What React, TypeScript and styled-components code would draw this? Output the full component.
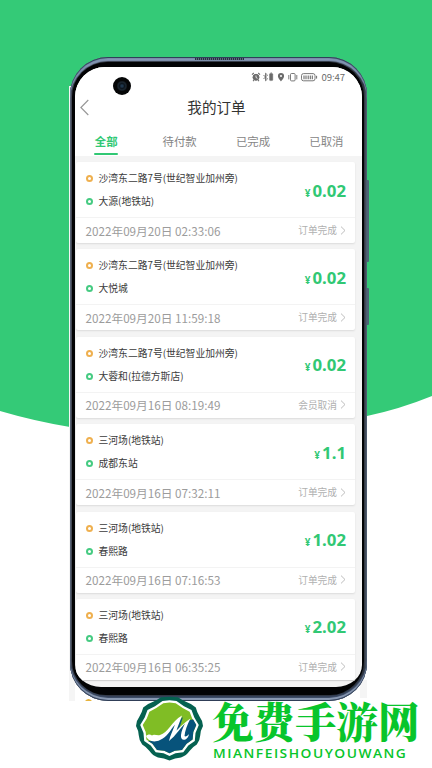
import * as React from "react";
import styled, { createGlobalStyle } from "styled-components";

type Order = {
  from: string;
  to: string;
  date: string;
  price: string;
  status: string;
};

const orders: Order[] = [
  {
    from: "沙湾东二路7号(世纪智业加州旁)",
    to: "大源(地铁站)",
    date: "2022年09月20日 02:33:06",
    price: "0.02",
    status: "订单完成",
  },
  {
    from: "沙湾东二路7号(世纪智业加州旁)",
    to: "大悦城",
    date: "2022年09月20日 11:59:18",
    price: "0.02",
    status: "订单完成",
  },
  {
    from: "沙湾东二路7号(世纪智业加州旁)",
    to: "大蓉和(拉德方斯店)",
    date: "2022年09月16日 08:19:49",
    price: "0.02",
    status: "会员取消",
  },
  {
    from: "三河场(地铁站)",
    to: "成都东站",
    date: "2022年09月16日 07:32:11",
    price: "1.1",
    status: "订单完成",
  },
  {
    from: "三河场(地铁站)",
    to: "春熙路",
    date: "2022年09月16日 07:16:53",
    price: "1.02",
    status: "订单完成",
  },
  {
    from: "三河场(地铁站)",
    to: "春熙路",
    date: "2022年09月16日 06:35:25",
    price: "2.02",
    status: "订单完成",
  },
];

const tabs = ["全部", "待付款", "已完成", "已取消"];

const GlobalStyle = createGlobalStyle`
  *,
  *::before,
  *::after {
    box-sizing: border-box;
  }

  body {
    margin: 0;
    background: #fff;
    font-family: "Noto Sans CJK SC", "Noto Sans", sans-serif;
  }
`;

const Page = styled.div`
  position: relative;
  width: 432px;
  height: 768px;
  padding: 57px 0 0 70px;
  overflow: hidden;
`;

const Backdrop = styled.svg`
  position: absolute;
  top: 0;
  left: 0;
`;

const Phone = styled.div`
  position: relative;
  width: 297px;
  height: 644px;
  padding: 5px 3px 6px 2px;
  border-radius: 38px 38px 38px 38px;
  background: linear-gradient(90deg, #6d7480 0, #353a45 2px, #2c323c 294px, #5a6475 297px);
  box-shadow: inset 0 1px 1px #26384f, inset 0 4px 1px #8497b5,
    inset 0 -1px 1px #26344c, inset 0 -3px 1px #93a3bd,
    inset 0 -5px 1px #35435c;
`;

const Bezel = styled.div`
  height: 100%;
  padding: 5px 2px 8px 3px;
  border-radius: 35px 35px 34px 34px;
  background: #020304;
`;

const Screen = styled.div`
  height: 100%;
  overflow: hidden;
  border-radius: 30px 30px 26px 26px / 30px 30px 22px 22px;
  background: #f4f4f4;
`;

const Speaker = styled.div`
  position: absolute;
  top: 1px;
  left: 125px;
  width: 49px;
  height: 2px;
  background: repeating-linear-gradient(90deg, #26303e 0 1px, #5c6b80 1px 2px);
`;

const SideButton = styled.div<{ $top: number; $height: number }>`
  position: absolute;
  top: ${(p) => p.$top}px;
  right: -1.5px;
  width: 2px;
  height: ${(p) => p.$height}px;
  border-radius: 0 1px 1px 0;
  background: #4b6676;
`;

const Camera = styled.div`
  position: absolute;
  top: 20px;
  left: 43px;
  width: 18px;
  height: 18px;
  border-radius: 50%;
  background: radial-gradient(circle, #1f364c 0 1px, #0c151d 2.5px, #1c2731 4px, #050607 5.5px);
`;

const Header = styled.header`
  height: 89px;
  background: #fff;
`;

const StatusBar = styled.div`
  display: flex;
  align-items: center;
  justify-content: flex-end;
  height: 20px;
  padding-right: 17px;
  color: #6b6b6b;
`;

const Clock = styled.span`
  margin-left: 2px;
  font-size: 9.6px;
  font-weight: 400;
  letter-spacing: -0.1px;
  line-height: 20px;
`;

const TitleBar = styled.div`
  display: grid;
  grid-template-columns: 20px 1fr 20px;
  align-items: center;
  height: 40px;
  padding: 0 5px 0 5px;
`;

const Title = styled.h1`
  margin: 0;
  padding-right: 4px;
  color: #333;
  font-size: 14.6px;
  font-weight: 400;
  line-height: 40px;
  text-align: center;
`;

const Tabs = styled.nav`
  display: flex;
  height: 29px;
  margin-left: -5.5px;
`;

const Tab = styled.div<{ $active: boolean }>`
  display: flex;
  flex: 0 0 73.4px;
  flex-direction: column;
  align-items: center;
  color: ${(p) => (p.$active ? "#31c874" : "#858585")};
  font-size: 11.4px;
  font-weight: ${(p) => (p.$active ? 700 : 400)};
  line-height: 28px;
  white-space: nowrap;

  &::after {
    content: "";
    width: 24px;
    height: 2px;
    margin-top: -2px;
    border-radius: 1px;
    background: ${(p) => (p.$active ? "#31c874" : "transparent")};
  }
`;

const List = styled.main`
  display: flex;
  flex-direction: column;
  gap: 6.4px;
  padding: 6px 7px 0 1px;
`;

const Card = styled.article`
  flex: none;
  height: 81px;
  border-radius: 2px;
  background: #fff;
  box-shadow: 0 1px 2px rgba(0, 0, 0, 0.1);
`;

const Trip = styled.div`
  display: flex;
  align-items: center;
  justify-content: space-between;
  height: 56px;
  padding: 1px 9px 0 9.5px;
  border-bottom: 1px solid #f3f3f3;
`;

const Stops = styled.div`
  display: flex;
  flex-direction: column;
`;

const Stop = styled.div<{ $color: string }>`
  display: flex;
  align-items: center;
  gap: 6px;
  height: 23px;
  color: #3b3b3b;
  font-size: 9.8px;
  line-height: 23px;
  white-space: nowrap;

  &::before {
    content: "";
    width: 7px;
    height: 7px;
    border: 2px solid ${(p) => p.$color};
    border-radius: 50%;
  }
`;

const Price = styled.div`
  display: flex;
  align-items: baseline;
  gap: 2px;
  padding-top: 3px;
  color: #31c874;
  font-family: "Noto Sans", "Noto Sans CJK SC", sans-serif;
  font-size: 16.8px;
  font-weight: 700;
  line-height: 24px;
`;

const Yen = styled.span`
  font-size: 10px;
`;

const Meta = styled.div`
  display: flex;
  align-items: center;
  justify-content: space-between;
  height: 24px;
  padding: 0 9px 0 9.5px;
  color: #9c9c9c;
  font-size: 11.7px;
  font-weight: 400;
  white-space: nowrap;
`;

const Status = styled.span`
  display: flex;
  align-items: center;
  gap: 3px;
  color: #b0b0b0;
  font-size: 9.7px;
`;

const ListEnd = styled.div`
  height: 1px;
  background: #e2e2e2;
`;

const Brand = styled.footer`
  position: absolute;
  top: 695px;
  left: 136px;
  display: flex;
  gap: 9px;
`;

const BrandText = styled.div`
  display: flex;
  flex-direction: column;
  padding-top: 1px;
  color: #08c52b;
  white-space: nowrap;
`;

const BrandName = styled.div`
  margin-left: -1px;
  font-family: "Noto Serif CJK SC", "Noto Sans CJK SC", serif;
  font-size: 41.5px;
  font-weight: 900;
  line-height: 48px;
`;

const BrandLatin = styled.div`
  font-family: "Open Sans", sans-serif;
  font-size: 12px;
  font-weight: 600;
  letter-spacing: 1.3px;
  line-height: 19px;
  transform: scaleX(1.15);
  transform-origin: left;
`;

const StatusIcons = () => (
  <svg width="69" height="10" viewBox="0 0 69 10" fill="none" stroke="currentColor">
    <circle cx="5" cy="5.3" r="3" fill="currentColor" />
    <path d="M1 2.6 2.8 1M9 2.6 7.2 1M2 9.2l1-1M8 9.2l-1-1" strokeWidth="1.1" />
    <path d="M5 3.5v2l1.5.8" stroke="#fff" strokeWidth=".8" />
    <path d="m12.5 3 4 4-2 1.8V1.2l2 1.8-4 4" strokeWidth=".9" />
    <rect x="18.5" y="1.6" width="3.3" height="7" rx=".8" fill="currentColor" strokeWidth=".4" />
    <path d="M19.6 1h1.2" />
    <path d="M30 1a3.1 3.1 0 0 0-3.1 3.1C26.9 6.4 30 9.4 30 9.4s3.1-3 3.1-5.3A3.1 3.1 0 0 0 30 1Z" fill="currentColor" stroke="none" />
    <circle cx="30" cy="4" r="1" fill="#fff" stroke="none" />
    <rect x="39.5" y="1.5" width="4.6" height="7.4" rx="1" strokeWidth=".9" />
    <path d="M37.8 3v4.4M45.8 3v4.4" strokeWidth=".9" />
    <rect x="50.5" y="1.6" width="13.5" height="7.2" rx="2" strokeWidth=".9" />
    <path d="M53 3.4v3.8M55 3.4v3.8M57.2 3.4v3.8M59.3 3.4v3.8M61.3 3.4v3.8" strokeWidth="1.1" />
    <path d="M65.6 3.8v2.8" strokeWidth="1" />
  </svg>
);

const BackIcon = () => (
  <svg width="10" height="17" viewBox="0 0 10 17" fill="none" stroke="#999" strokeWidth="1.2">
    <path d="M8.3 1 .9 8.5l7.4 7.5" />
  </svg>
);

const ArrowIcon = () => (
  <svg width="6" height="9" viewBox="0 0 6 9" fill="none" stroke="#b5b5b5" strokeWidth=".9">
    <path d="m1 .6 4 3.9-4 3.9" />
  </svg>
);

const Logo = () => (
  <svg width="68" height="68" viewBox="0 0 68 68">
    <path
      d="M25 2.2Q33.5 1.2 42 2.2Q46.5 5.5 51 7.2Q56.5 9 59.8 12.5Q61 17.500 63.800 22Q67 26 67 31Q64.500 35.500 64.300 40Q64 45.500 60.800 49.500Q56.500 52 53.500 56Q50.500 60.500 45 62.500Q39 63.200 33.500 65.500Q28 63.200 22 62.500Q16.500 60.500 13.500 56Q10.500 52 6.200 49.500Q3 45.500 2.700 40Q2.500 35.500 0 31Q0 26 3.200 22Q6 17.500 7.200 12.500Q10.500 9 16 7.200Q20.500 5.500 25 2.200Z"
      fill="#056150"
    />
    <path
      d="m26.5 6 7-.8 7 .8 7.5 5.2 7.5 3.8 2.8 7.5 4.5 7.5-3.3 8-.7 8-6.5 4.5-5 6.800-7.800 1-6 2.600-6-2.600-7.800-1-5-6.800-6.500-4.500-.7-8-3.300-8 4.500-7.500L11.500 15 19 11.200Z"
      fill="#fff"
    />
    <path
      d="m27.3 8.2 6.200-.7 6.200 .7 7 4.800 6.900 3.700 2.600 6.800 4.100 6.600-3 7-.7 7.400-6 4.200-4.600 6.200-7.200 .9-5.300 2.400-5.300-2.400-7.200-.9-4.600-6.200-6-4.200-.7-7.400-3-7 4.100-6.600 2.600-6.800 6.900-3.700Z"
      fill="#80bd25"
    />
    <path
      d="M12 46C24 47 31 38 36 32L47 22 43 34 53 25 57.200 24.500 60.300 30.100 57.300 37.100 56.600 44.500 50.600 48.700 46 54.900 38.800 55.800 33.500 58.200 28.200 55.800 21 54.900 16.400 48.700Z"
      fill="#07537b"
    />
    <path
      d="M10 41c2-2 4-2 6-.5 2-2 5 .5 8-.5 8-2 11-13 22-19.500-2 6-4 10.500-5.500 15C45 31 49 27 54.500 23.500 51 30 49 36 48.500 41c1 1 3 0 4.500-2-1 7-9 8-8 1 .5-4 2-7.500 4-11.500-5 5-9 12-16 17.500 1-5 4-11 6-16.500-5 6-8 13-15 15.500C18 48 12 46 10 41Z"
      fill="#fff"
    />
  </svg>
);

const App = () => (
  <Page>
    <GlobalStyle />
    <Backdrop width="432" height="768" viewBox="0 0 432 768">
      <path d="M0 0H432V396Q400 409 367 416C260 444 160 446 70 427Q34 421 0 411Z" fill="#34ca77" />
      <path d="M69 86h6v615h-6zM360 680h7v18h-7z" fill="#f5f5f5" />
      <path d="M85 701q3.5-4 7 0Z" fill="#e7b33c" />
    </Backdrop>
    <Phone>
      <Speaker />
      <SideButton $top={123} $height={82} />
      <SideButton $top={231} $height={37} />
      <Bezel>
        <Screen>
          <Header>
            <StatusBar>
              <StatusIcons />
              <Clock>09:47</Clock>
            </StatusBar>
            <TitleBar>
              <BackIcon />
              <Title>我的订单</Title>
            </TitleBar>
            <Tabs>
              {tabs.map((name, i) => (
                <Tab key={name} $active={i === 0}>
                  {name}
                </Tab>
              ))}
            </Tabs>
          </Header>
          <List>
            {orders.map((order) => (
              <Card key={order.date}>
                <Trip>
                  <Stops>
                    <Stop $color="#efb04f">{order.from}</Stop>
                    <Stop $color="#46cb82">{order.to}</Stop>
                  </Stops>
                  <Price>
                    <Yen>¥</Yen>
                    {order.price}
                  </Price>
                </Trip>
                <Meta>
                  {order.date}
                  <Status>
                    {order.status}
                    <ArrowIcon />
                  </Status>
                </Meta>
              </Card>
            ))}
          </List>
          <ListEnd />
        </Screen>
      </Bezel>
      <Camera />
    </Phone>
    <Brand>
      <Logo />
      <BrandText>
        <BrandName>免费手游网</BrandName>
        <BrandLatin>MIANFEISHOUYOUWANG</BrandLatin>
      </BrandText>
    </Brand>
  </Page>
);

export default App;
